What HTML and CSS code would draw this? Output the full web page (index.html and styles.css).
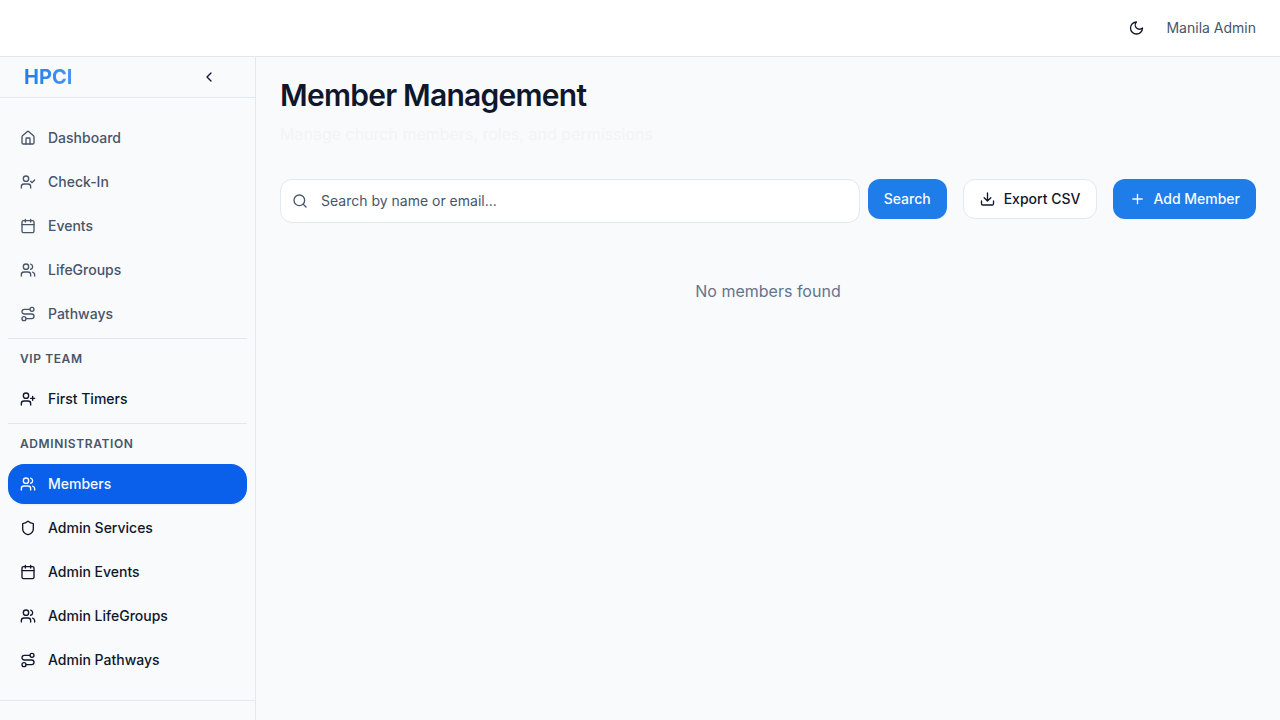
FILE: index.html
```
<!DOCTYPE html>
<html lang="en">
<head>
<meta charset="utf-8">
<title>Member Management</title>
<link rel="stylesheet" href="styles.css">
</head>
<body>
<svg class="sprite" aria-hidden="true">
  <symbol id="home" viewBox="0 0 24 24"><path d="M15 21v-8a1 1 0 0 0-1-1h-4a1 1 0 0 0-1 1v8"/><path d="M3 10a2 2 0 0 1 .709-1.528l7-5.999a2 2 0 0 1 2.582 0l7 5.999A2 2 0 0 1 21 10v9a2 2 0 0 1-2 2H5a2 2 0 0 1-2-2z"/></symbol>
  <symbol id="user-check" viewBox="0 0 24 24"><path d="m16 11 2 2 4-4"/><path d="M16 21v-2a4 4 0 0 0-4-4H6a4 4 0 0 0-4 4v2"/><circle cx="9" cy="7" r="4"/></symbol>
  <symbol id="user-plus" viewBox="0 0 24 24"><path d="M16 21v-2a4 4 0 0 0-4-4H6a4 4 0 0 0-4 4v2"/><circle cx="9" cy="7" r="4"/><path d="M19 8v6M22 11h-6"/></symbol>
  <symbol id="calendar" viewBox="0 0 24 24"><path d="M8 2v4M16 2v4"/><rect width="18" height="18" x="3" y="4" rx="2"/><path d="M3 10h18"/></symbol>
  <symbol id="users" viewBox="0 0 24 24"><path d="M16 21v-2a4 4 0 0 0-4-4H6a4 4 0 0 0-4 4v2"/><path d="M16 3.128a4 4 0 0 1 0 7.744"/><path d="M22 21v-2a4 4 0 0 0-3-3.87"/><circle cx="9" cy="7" r="4"/></symbol>
  <symbol id="route" viewBox="0 0 24 24"><circle cx="6" cy="19" r="3"/><path d="M9 19h8.5a3.5 3.5 0 0 0 0-7h-11a3.5 3.5 0 0 1 0-7H15"/><circle cx="18" cy="5" r="3"/></symbol>
  <symbol id="shield" viewBox="0 0 24 24"><path d="M20 13c0 5-3.5 7.500-7.660 8.950a1 1 0 0 1-.67-.01C7.500 20.500 4 18 4 13V6a1 1 0 0 1 1-1c2 0 4.500-1.200 6.240-2.720a1.170 1.170 0 0 1 1.520 0C14.510 3.810 17 5 19 5a1 1 0 0 1 1 1z"/></symbol>
  <symbol id="chevron" viewBox="0 0 24 24"><path d="m15 18-6-6 6-6"/></symbol>
  <symbol id="moon" viewBox="0 0 24 24"><path d="M12 3a6 6 0 0 0 9 9 9 9 0 1 1-9-9Z"/></symbol>
  <symbol id="search" viewBox="0 0 24 24"><path d="m21 21-4.340-4.340"/><circle cx="11" cy="11" r="8"/></symbol>
  <symbol id="download" viewBox="0 0 24 24"><path d="M12 15V3M21 15v4a2 2 0 0 1-2 2H5a2 2 0 0 1-2-2v-4M7 10l5 5 5-5"/></symbol>
  <symbol id="plus" viewBox="0 0 24 24"><path d="M5 12h14M12 5v14"/></symbol>
</svg>
<header class="topbar">
  <svg class="icon" viewBox="-0.75 0 24 24"><use href="#moon" width="24" height="24"/></svg>
  <span class="user-name">Manila Admin</span>
</header>
<div class="shell">
  <aside class="sidebar">
    <div class="brand-row">
      <span class="brand">HPCI</span>
      <svg class="icon"><use href="#chevron"/></svg>
    </div>
    <nav class="nav">
      <a class="nav-item muted"><svg class="icon"><use href="#home"/></svg>Dashboard</a>
      <a class="nav-item muted"><svg class="icon"><use href="#user-check"/></svg>Check-In</a>
      <a class="nav-item muted"><svg class="icon"><use href="#calendar"/></svg>Events</a>
      <a class="nav-item muted"><svg class="icon"><use href="#users"/></svg>LifeGroups</a>
      <a class="nav-item muted"><svg class="icon"><use href="#route"/></svg>Pathways</a>
      <section class="nav-section">
        <h2 class="nav-heading">VIP TEAM</h2>
        <a class="nav-item"><svg class="icon"><use href="#user-plus"/></svg>First Timers</a>
      </section>
      <section class="nav-section">
        <h2 class="nav-heading">ADMINISTRATION</h2>
        <div class="nav-list">
          <a class="nav-item active"><svg class="icon"><use href="#users"/></svg>Members</a>
          <a class="nav-item"><svg class="icon"><use href="#shield"/></svg>Admin Services</a>
          <a class="nav-item"><svg class="icon"><use href="#calendar"/></svg>Admin Events</a>
          <a class="nav-item"><svg class="icon"><use href="#users"/></svg>Admin LifeGroups</a>
          <a class="nav-item"><svg class="icon"><use href="#route"/></svg>Admin Pathways</a>
        </div>
      </section>
    </nav>
    <div class="sidebar-footer"></div>
  </aside>
  <main class="main">
    <h1 class="title">Member Management</h1>
    <p class="subtitle">Manage church members, roles, and permissions</p>
    <div class="toolbar">
      <form class="search-form">
        <label class="search-box">
          <svg class="icon"><use href="#search"/></svg>
          <input class="search-input" type="text" placeholder="Search by name or email...">
        </label>
        <button class="btn primary" type="button">Search</button>
      </form>
      <button class="btn outline" type="button"><svg class="icon" viewBox="0.75 0 24 24"><use href="#download" width="24" height="24"/></svg>Export CSV</button>
      <button class="btn primary" type="button"><svg class="icon" viewBox="-0.75 0 24 24"><use href="#plus" width="24" height="24"/></svg>Add Member</button>
    </div>
    <p class="empty">No members found</p>
  </main>
</div>
</body>
</html>
```
FILE: styles.css
```
* { box-sizing: border-box; }
body {
  margin: 0;
  height: 720px;
  display: flex;
  flex-direction: column;
  overflow: hidden;
  background: #f9fafc;
  color: #0f172a;
  font-family: Inter, sans-serif;
  font-size: 14px;
  line-height: 20px;
}
h1, h2, p { margin: 0; }
.sprite { display: none; }
.icon {
  width: 16px;
  height: 16px;
  flex: none;
  fill: none;
  stroke: currentColor;
  stroke-width: 2;
  stroke-linecap: round;
  stroke-linejoin: round;
}
.topbar {
  height: 57px;
  flex: none;
  display: flex;
  align-items: center;
  justify-content: flex-end;
  gap: 22px;
  padding-right: 24px;
  background: #fff;
  border-bottom: 1px solid #e2e8f0;
}
.user-name { color: #475569; }
.shell { flex: 1; min-height: 0; display: flex; }
.sidebar {
  width: 256px;
  flex: none;
  display: flex;
  flex-direction: column;
  border-right: 1px solid #e2e8f0;
}
.brand-row {
  height: 41px;
  flex: none;
  display: flex;
  align-items: center;
  justify-content: space-between;
  padding: 0 38px 0 24px;
  border-bottom: 1px solid #e2e8f0;
}
.brand {
  font-size: 20px;
  line-height: 28px;
  font-weight: 700;
  background: linear-gradient(90deg, #1f7dea, #4b93f4);
  background-clip: text;
  -webkit-background-clip: text;
  color: transparent;
}
.nav {
  flex: 1;
  padding: 20px 8px 0;
  display: flex;
  flex-direction: column;
  gap: 4px;
}
.nav-item {
  height: 40px;
  flex: none;
  display: flex;
  align-items: center;
  gap: 12px;
  padding: 0 12px;
  border-radius: 16px;
  font-weight: 500;
}
.nav-item.muted { color: #475569; }
.nav-item.active {
  background: #0a60ea;
  color: #f8fafc;
  box-shadow: 0 1px 2px rgba(15, 23, 42, 0.05);
}
.nav-section { border-top: 1px solid #e2e8f0; }
.nav-heading {
  padding: 12px 12px;
  font-size: 12px;
  line-height: 16px;
  font-weight: 600;
  letter-spacing: 0.6px;
  color: #475569;
}
.nav-list { display: flex; flex-direction: column; gap: 4px; }
.sidebar-footer { height: 20px; border-top: 1px solid #e2e8f0; }
.main { flex: 1; padding: 20px 24px; }
.title {
  font-size: 30px;
  line-height: 36px;
  font-weight: 600;
  letter-spacing: -0.75px;
}
.subtitle {
  margin-top: 9px;
  font-size: 16px;
  line-height: 24px;
  color: #f3f4f6;
}
.toolbar {
  margin-top: 33px;
  display: flex;
  align-items: flex-start;
  gap: 16px;
}
.search-form { flex: 1; display: flex; align-items: flex-start; gap: 8px; }
.search-box {
  flex: 1;
  height: 44px;
  display: flex;
  align-items: center;
  gap: 13px;
  padding: 0 11px;
  background: #fff;
  border: 1px solid #e2e8f0;
  border-radius: 12px;
  color: #475569;
}
.search-input {
  flex: 1;
  min-width: 0;
  padding: 0;
  border: 0;
  outline: 0;
  background: none;
  font: inherit;
}
.search-input::placeholder { color: #475569; }
.btn {
  height: 40px;
  display: flex;
  align-items: center;
  gap: 8px;
  padding: 0 16px;
  border: 0;
  border-radius: 12px;
  font: inherit;
  font-weight: 500;
  white-space: nowrap;
}
.btn.primary { background: #1f7dea; color: #f8fafc; }
.btn.outline { background: #fff; color: #0f172a; border: 1px solid #e2e8f0; }
.empty {
  margin-top: 56px;
  text-align: center;
  font-size: 16px;
  line-height: 24px;
  color: #64748b;
}
```
